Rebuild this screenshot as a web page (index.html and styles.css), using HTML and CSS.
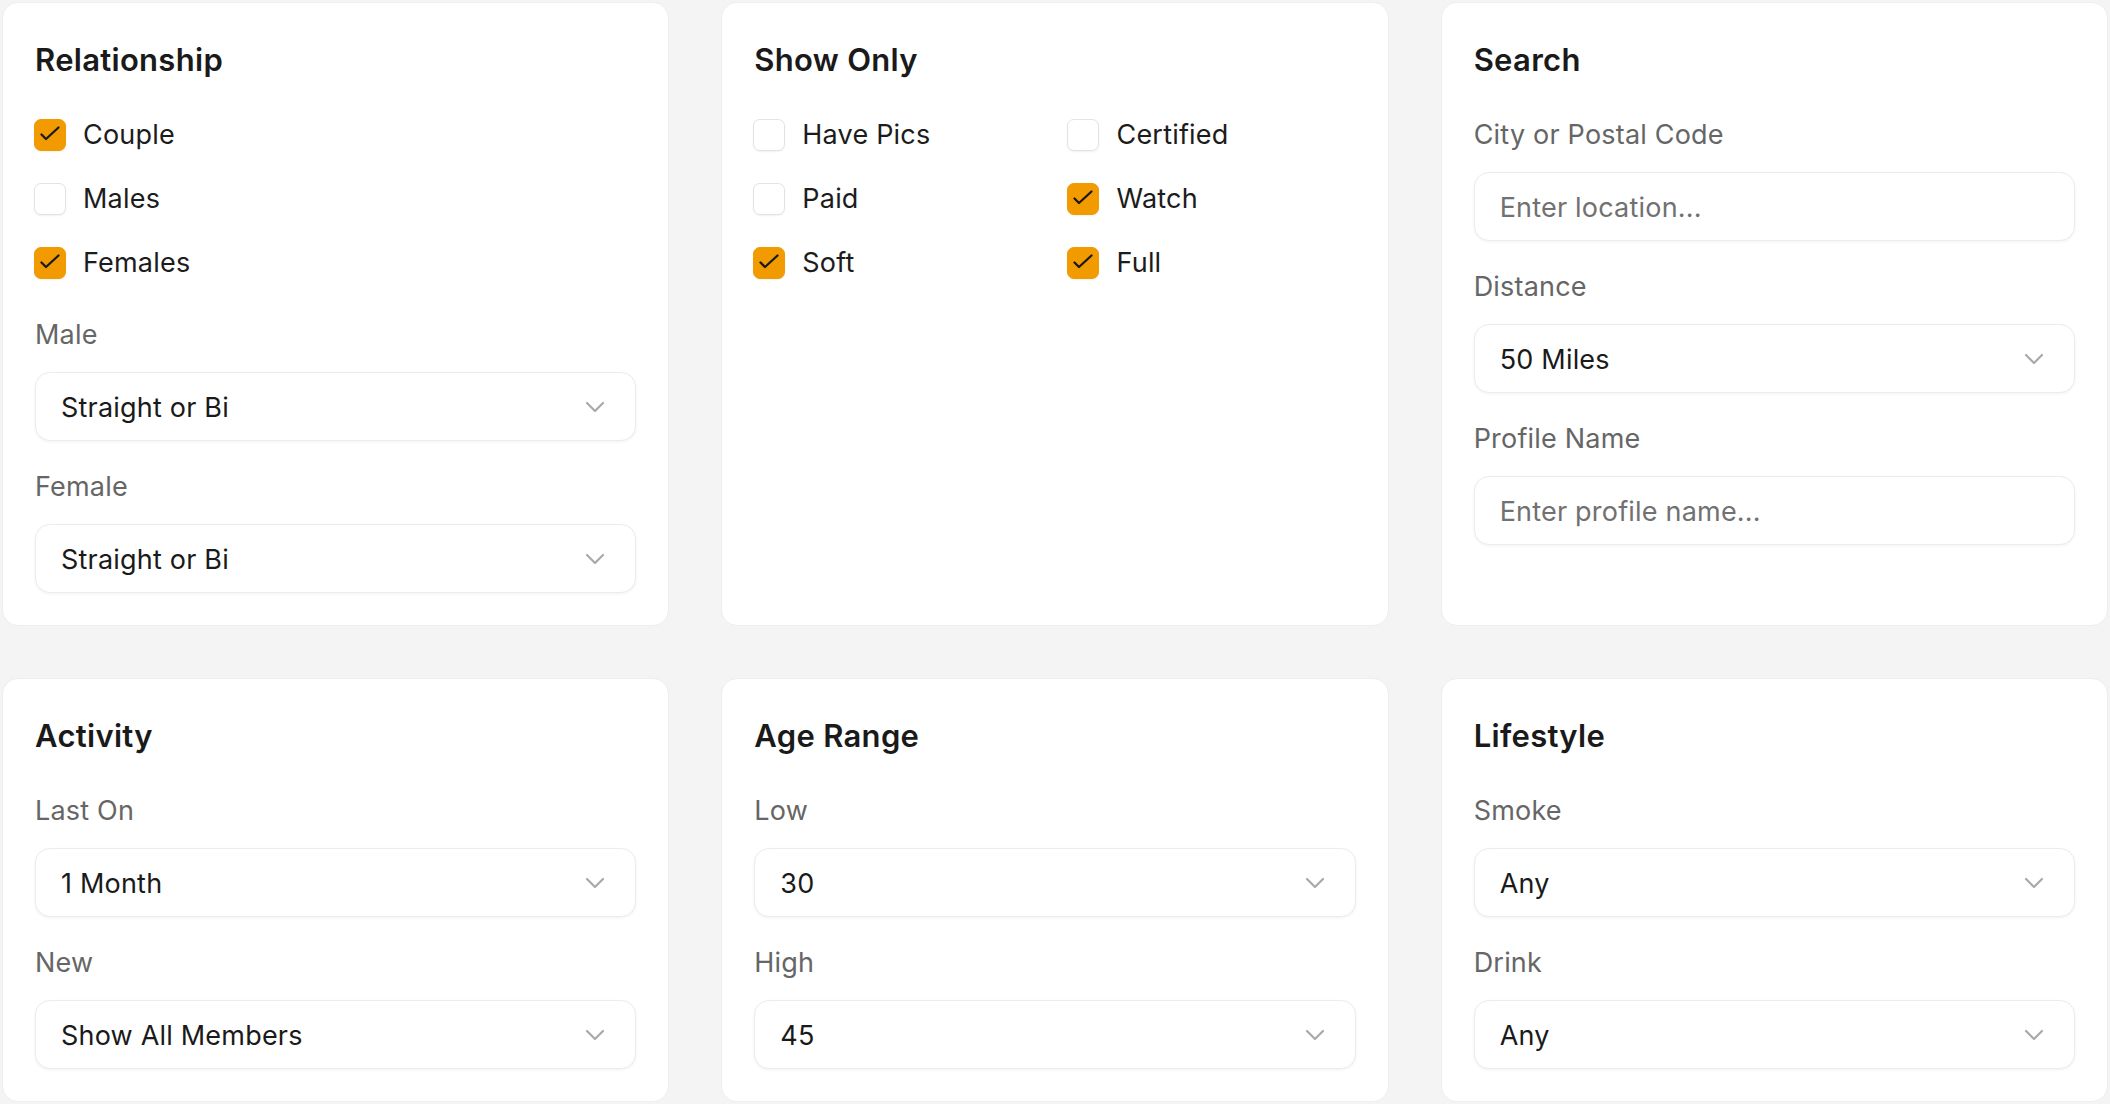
FILE: index.html
```html
<!DOCTYPE html>
<html lang="en">
<head>
<meta charset="utf-8">
<title>Filters</title>
<link rel="stylesheet" href="styles.css">
</head>
<body>
<main class="grid">
  <section class="card">
    <h2 class="card-title">Relationship</h2>
    <div class="checks">
      <label class="check"><span class="box is-on"><svg viewBox="0 0 32 32"><path d="M7.5 15.5 L12 20 L24.5 8.5"/></svg></span><span class="check-text">Couple</span></label>
      <label class="check"><span class="box"></span><span class="check-text">Males</span></label>
      <label class="check"><span class="box is-on"><svg viewBox="0 0 32 32"><path d="M7.5 15.5 L12 20 L24.5 8.5"/></svg></span><span class="check-text">Females</span></label>
    </div>
    <div class="field">
      <div class="field-label">Male</div>
      <div class="select"><span class="select-value">Straight or Bi</span><svg class="chev" viewBox="0 0 20 12"><polyline points="2,2 10,10 18,2"/></svg></div>
    </div>
    <div class="field">
      <div class="field-label">Female</div>
      <div class="select"><span class="select-value">Straight or Bi</span><svg class="chev" viewBox="0 0 20 12"><polyline points="2,2 10,10 18,2"/></svg></div>
    </div>
  </section>

  <section class="card">
    <h2 class="card-title">Show Only</h2>
    <div class="checks checks-2col">
      <label class="check"><span class="box"></span><span class="check-text">Have Pics</span></label>
      <label class="check"><span class="box"></span><span class="check-text">Certified</span></label>
      <label class="check"><span class="box"></span><span class="check-text">Paid</span></label>
      <label class="check"><span class="box is-on"><svg viewBox="0 0 32 32"><path d="M7.5 15.5 L12 20 L24.5 8.5"/></svg></span><span class="check-text">Watch</span></label>
      <label class="check"><span class="box is-on"><svg viewBox="0 0 32 32"><path d="M7.5 15.5 L12 20 L24.5 8.5"/></svg></span><span class="check-text">Soft</span></label>
      <label class="check"><span class="box is-on"><svg viewBox="0 0 32 32"><path d="M7.5 15.5 L12 20 L24.5 8.5"/></svg></span><span class="check-text">Full</span></label>
    </div>
  </section>

  <section class="card">
    <h2 class="card-title">Search</h2>
    <div class="field">
      <div class="field-label">City or Postal Code</div>
      <input class="input" type="text" placeholder="Enter location...">
    </div>
    <div class="field">
      <div class="field-label">Distance</div>
      <div class="select"><span class="select-value">50 Miles</span><svg class="chev" viewBox="0 0 20 12"><polyline points="2,2 10,10 18,2"/></svg></div>
    </div>
    <div class="field">
      <div class="field-label">Profile Name</div>
      <input class="input" type="text" placeholder="Enter profile name...">
    </div>
  </section>

  <section class="card">
    <h2 class="card-title">Activity</h2>
    <div class="field">
      <div class="field-label">Last On</div>
      <div class="select"><span class="select-value">1 Month</span><svg class="chev" viewBox="0 0 20 12"><polyline points="2,2 10,10 18,2"/></svg></div>
    </div>
    <div class="field">
      <div class="field-label">New</div>
      <div class="select"><span class="select-value">Show All Members</span><svg class="chev" viewBox="0 0 20 12"><polyline points="2,2 10,10 18,2"/></svg></div>
    </div>
  </section>

  <section class="card">
    <h2 class="card-title">Age Range</h2>
    <div class="field">
      <div class="field-label">Low</div>
      <div class="select"><span class="select-value">30</span><svg class="chev" viewBox="0 0 20 12"><polyline points="2,2 10,10 18,2"/></svg></div>
    </div>
    <div class="field">
      <div class="field-label">High</div>
      <div class="select"><span class="select-value">45</span><svg class="chev" viewBox="0 0 20 12"><polyline points="2,2 10,10 18,2"/></svg></div>
    </div>
  </section>

  <section class="card">
    <h2 class="card-title">Lifestyle</h2>
    <div class="field">
      <div class="field-label">Smoke</div>
      <div class="select"><span class="select-value">Any</span><svg class="chev" viewBox="0 0 20 12"><polyline points="2,2 10,10 18,2"/></svg></div>
    </div>
    <div class="field">
      <div class="field-label">Drink</div>
      <div class="select"><span class="select-value">Any</span><svg class="chev" viewBox="0 0 20 12"><polyline points="2,2 10,10 18,2"/></svg></div>
    </div>
  </section>
</main>
</body>
</html>
```

FILE: styles.css
```css
* { box-sizing: border-box; }

html, body {
  margin: 0;
  padding: 0;
  background: #f4f4f4;
}

body {
  font-family: Inter, "Noto Sans", "Liberation Sans", sans-serif;
  color: #1c1c1c;
  padding: 2px;
}

.grid {
  display: grid;
  grid-template-columns: repeat(3, 1fr);
  column-gap: 52px;
  row-gap: 52px;
}

.card {
  background: #ffffff;
  border: 1px solid #eeeeee;
  border-radius: 16px;
  padding: 32px;
  display: flex;
  flex-direction: column;
}

.card-title {
  margin: 0 0 32px 0;
  font-size: 31px;
  line-height: 50px;
  font-weight: 600;
  color: #1a1a1a;
  letter-spacing: 0.3px;
}

.checks {
  display: flex;
  flex-direction: column;
  gap: 28px;
  margin-bottom: 36px;
}

.checks-2col {
  display: grid;
  grid-template-columns: 1fr 1fr;
  column-gap: 27px;
  row-gap: 28px;
}

.check {
  display: flex;
  align-items: center;
  height: 36px;
  gap: 17px;
  font-size: 27px;
  line-height: 36px;
  letter-spacing: 0.2px;
  color: #1c1c1c;
}

.box {
  flex: 0 0 auto;
  width: 32px;
  height: 32px;
  margin-left: -1px;
  border-radius: 7px;
  background: #ffffff;
  border: 1.5px solid #e3e3e3;
  box-shadow: 0 1px 2px rgba(0, 0, 0, 0.06);
  display: flex;
  align-items: center;
  justify-content: center;
}

.box.is-on {
  background: #f29b00;
  border-color: #f29b00;
}

.box svg {
  width: 32px;
  height: 32px;
  flex: 0 0 auto;
}

.box svg path {
  fill: none;
  stroke: #1a1a1a;
  stroke-width: 2.3;
  stroke-linecap: round;
  stroke-linejoin: round;
}

.field {
  display: flex;
  flex-direction: column;
}

.field + .field {
  margin-top: 28px;
}

.field-label {
  font-size: 27px;
  line-height: 36px;
  letter-spacing: 0.2px;
  color: #666666;
  margin-bottom: 19px;
}

.select,
.input {
  height: 69px;
  width: 100%;
  border: 1px solid #ececec;
  border-radius: 15px;
  background: #ffffff;
  box-shadow: 0 1px 3px rgba(0, 0, 0, 0.06);
  font-family: inherit;
  font-size: 27px;
  letter-spacing: 0.2px;
  color: #1a1a1a;
  padding: 0 30px 0 25px;
}

.select {
  display: flex;
  align-items: center;
  justify-content: space-between;
}

.select-value {
  line-height: 36px;
  padding-top: 2px;
}

.chev {
  width: 20px;
  height: 12px;
  flex: 0 0 auto;
}

.chev polyline {
  fill: none;
  stroke: #a9a9a9;
  stroke-width: 2.2;
  stroke-linecap: round;
  stroke-linejoin: round;
}

.input {
  display: block;
  outline: none;
  padding-top: 2px;
}

.input::placeholder {
  color: #717171;
  opacity: 1;
}
```
